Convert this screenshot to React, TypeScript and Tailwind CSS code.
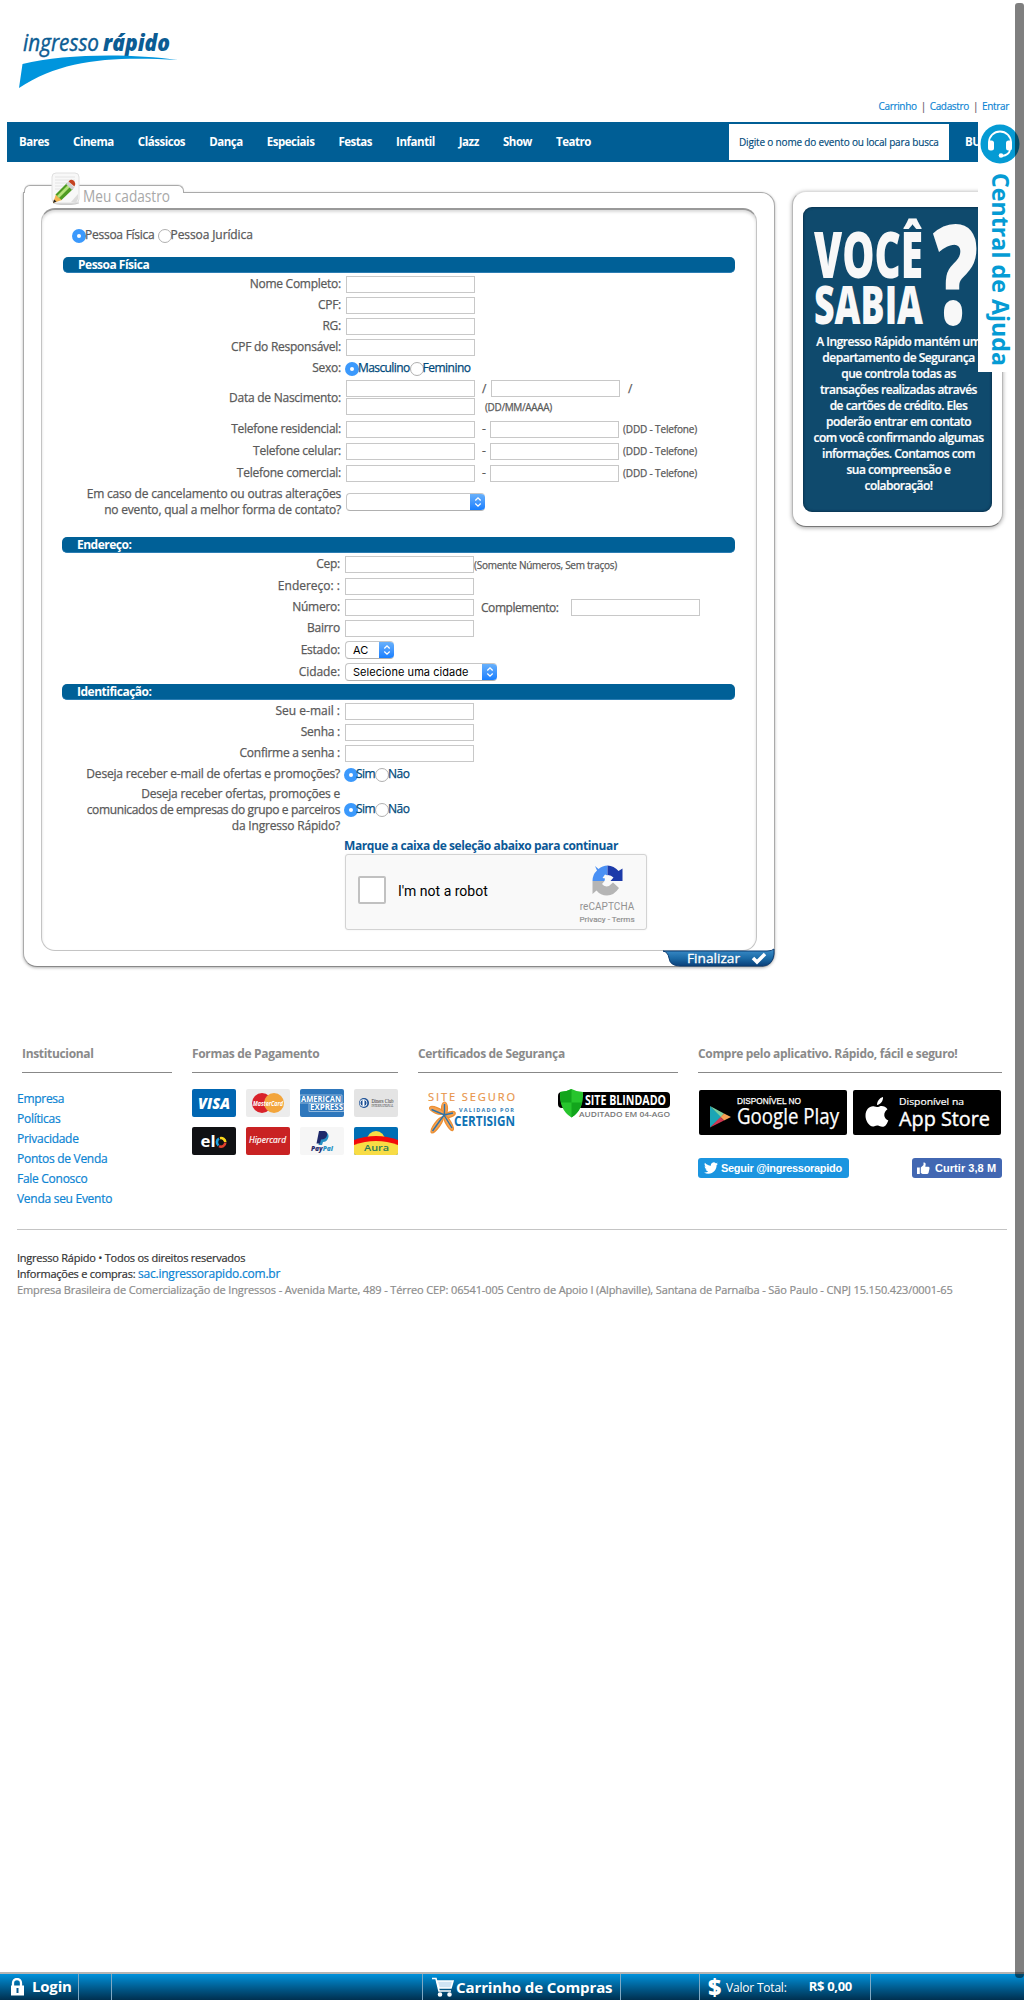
import type { ReactNode } from "react";

const SANS = "'Open Sans', 'Noto Sans', sans-serif";

function Logo() {
  return (
    <svg width="162" height="62" viewBox="0 0 162 62" className="block overflow-visible" fontFamily={SANS} fontStyle="italic" fill="#0b5c93">
      <text x="5" y="21" fontSize="23" stroke="#0b5c93" strokeWidth=".4" textLength="76" lengthAdjust="spacingAndGlyphs">ingresso</text>
      <text x="85" y="21" fontSize="23" fontWeight="800" textLength="67" lengthAdjust="spacingAndGlyphs">rápido</text>
      <path d="M4.500 34C45 24 110 23 160 30C95 26.500 45 29 1 58Z" fill="#0095dd" />
    </svg>
  );
}

function Radio({ checked = false }: { checked?: boolean }) {
  return checked ? (
    <span className="flex size-[14px] shrink-0 items-center justify-center rounded-full bg-[#3b99fc]">
      <span className="size-1 rounded-full bg-white" />
    </span>
  ) : (
    <span className="size-[14px] shrink-0 rounded-full border border-[#b0b0b0] bg-white" />
  );
}

function Field() {
  return <input className="block h-[17px] w-[129px] shrink-0 border border-[#c8c8c8] bg-white" />;
}

function Select({ text = "", width }: { text?: string; width: string }) {
  return (
    <div className={`flex h-[18px] overflow-hidden rounded-[4px] border border-r-0 border-[#c6c6c6] border-b-[#b0b0b0] bg-white ${width}`}>
      <span className="flex-1 pl-[7px] font-['Inter'] text-[11px] leading-4 font-normal tracking-[0.05px] whitespace-nowrap text-black [-webkit-text-stroke:0px]">{text}</span>
      <span className="-my-px flex w-[15px] items-center justify-center rounded-r-[4px] bg-linear-to-b from-[#6cb3fa] to-[#0a7bff]">
        <svg width="8" height="12" viewBox="0 0 8 12" fill="none" stroke="#fff" strokeWidth="1.300">
          <path d="M1.300 4.500L4 1.800L6.700 4.500M1.300 7.500L4 10.200L6.700 7.500" />
        </svg>
      </span>
    </div>
  );
}

function Row({ label, h = "h-[21px]", children }: { label: ReactNode; h?: string; children?: ReactNode }) {
  return (
    <div className={`flex items-center ${h}`}>
      <div className="mr-[5px] w-[278px] shrink-0 pb-px text-right leading-4 whitespace-nowrap">{label}</div>
      {children}
    </div>
  );
}

function Bar({ children, width = "w-[673px]" }: { children: ReactNode; width?: string }) {
  return (
    <div className={`h-4 rounded-[5px] border-b border-[#2b7db3] bg-[#006097] pl-[15px] text-[12px] leading-[15px] font-bold tracking-[-0.5px] text-white [-webkit-text-stroke:0px] ${width}`}>
      {children}
    </div>
  );
}

function Phone({ label }: { label: string }) {
  return (
    <Row label={label} h="h-[22px]">
      <Field />
      <span className="w-[15px] pl-[7px]">-</span>
      <Field />
      <span className="pl-1 text-[10px] tracking-[-0.15px] whitespace-nowrap">(DDD - Telefone)</span>
    </Row>
  );
}

function YesNo() {
  return (
    <div className="-ml-px flex items-center tracking-[-0.55px] text-[#00497a]">
      <Radio checked /><span className="-ml-0.5 pb-0.5">Sim</span><Radio /><span className="-ml-px pb-0.5">Não</span>
    </div>
  );
}

function PencilIcon() {
  return (
    <svg width="30" height="34" viewBox="0 0 30 34" className="absolute top-[-13px] left-[28px] z-20">
      <ellipse cx="15" cy="31" rx="13" ry="2" fill="#ccc" />
      <rect x="1" y="1" width="27" height="30" rx="4" fill="#f8f8f8" stroke="#e0e0e0" />
      <path d="M4 5h20M4 8h20M4 11h16M4 14h12M4 17h10" stroke="#e4e4e4" />
      <path d="M20 30l7-8v5l-2 4z" fill="#ddd" />
      <path d="M2 31l3-9 6 6z" fill="#f4b451" />
      <path d="M2 31l1-3.500 2.500 2z" fill="#222" />
      <path d="M4.500 22.500L16 11l6 6L10.500 28z" fill="#4e9c22" />
      <path d="M6 24L17.500 12.500l2 2L8 26z" fill="#b5e27a" />
      <path d="M15 12l2.500-2.500 6 6-2.500 2.500z" fill="#d0d0d0" />
      <path d="M17.500 9.500l1.500-1.500q3-.8 4.500 1.500t0 5z" fill="#c4421f" />
    </svg>
  );
}

function Captcha() {
  return (
    <div className="flex h-[76px] w-[302px] items-center rounded-[3px] border border-[#d3d3d3] bg-[#f9f9f9] font-['Roboto'] font-normal shadow-[0_0_2px_rgba(0,0,0,0.08)] [-webkit-text-stroke:0px]">
      <span className="-mt-1 ml-3 size-7 rounded-[2px] border-2 border-[#c1c1c1] bg-white" />
      <span className="ml-3 pb-0.5 text-[14px] tracking-[0px] text-black">I'm not a robot</span>
      <div className="mt-[7px] mr-3 ml-auto flex w-[54px] flex-col items-center text-[#929292]">
        <svg width="31" height="31" viewBox="0 0 31 31">
          <path d="M3 1L6.500 4Q10.500 .5 15.500 .5V10.500L13 9.500L10.500 13L13 13.500L12.500 16H.5Q.5 9.500 5 5.500z" fill="#4a90f4" />
          <path d="M15.500 .5Q22 .8 26.500 6L30.500 3.500V16H18.500L21.500 12.500Q19 9.800 15.500 10z" fill="#1c3aa9" />
          <path d="M.5 16H12.500L10 19Q12.500 22.500 17 21L21 17.500L27 23Q22 30.500 15 30.500Q8.500 30.500 4.500 25.500L.5 29z" fill="#b5b5b5" />
        </svg>
        <span className="mt-[3px] text-[10px] leading-[15px] tracking-[0.05px]">reCAPTCHA</span>
        <span className="text-[8px] leading-[12px] tracking-[0.05px] whitespace-nowrap [-webkit-text-stroke:0.2px]">Privacy - Terms</span>
      </div>
    </div>
  );
}

function Form() {
  return (
    <div className="relative mt-[23px] ml-4 w-[752px] font-normal tracking-[-0.25px] text-[#5a5a5a] [-webkit-text-stroke:0.25px]">
      <div className="relative z-10 ml-px h-2 w-[160px] rounded-t-[6px] border-t border-r border-l border-[#aaa] bg-white shadow-[0_-1px_1px_rgba(0,0,0,0.08)]" />
      <div className="relative -mt-px h-[775px] rounded-[14px] rounded-tl-none border border-[#aaa] border-b-[#888] bg-white px-[17px] pt-[15px] shadow-[0_1px_3px_rgba(0,0,0,0.3)]">
        <div className="h-[743px] rounded-[14px] border border-t-2 border-[#c4c4c4] border-t-[#999] bg-white pl-[21px] shadow-[inset_0_2px_3px_rgba(0,0,0,0.15)]">
          <div className="flex h-[47px] items-center pt-[5px] pl-[9px]">
            <Radio checked />
            <span className="-ml-px mr-[3px] pb-0.5">Pessoa Física</span>
            <Radio />
            <span className="-ml-px pb-0.5 tracking-[-0.1px]">Pessoa Jurídica</span>
          </div>
          <Bar width="w-[672px]">Pessoa Física</Bar>
          <div className="h-px" />
          <Row label="Nome Completo:"><Field /></Row>
          <Row label="CPF:"><Field /></Row>
          <Row label="RG:"><Field /></Row>
          <Row label="CPF do Responsável:"><Field /></Row>
          <Row label="Sexo:">
            <div className="-ml-px flex items-center tracking-[-0.6px] text-[#00497a]">
              <Radio checked /><span className="-ml-px pb-0.5">Masculino</span><Radio /><span className="-ml-px pb-0.5 tracking-[-0.5px]">Feminino</span>
            </div>
          </Row>
          <Row label="Data de Nascimento:" h="h-[39px]">
            <div className="-mt-0.5 flex flex-col gap-px">
              <div className="flex h-[17px] items-center"><Field /><span className="w-4 pl-[7px]">/</span><Field /><span className="pl-2">/</span></div>
              <div className="flex h-[17px] items-center"><Field /><span className="pt-0.5 pl-2.5 text-[10px] tracking-[-0.35px]">(DD/MM/AAAA)</span></div>
            </div>
          </Row>
          <Phone label="Telefone residencial:" />
          <Phone label="Telefone celular:" />
          <Phone label="Telefone comercial:" />
          <Row label={<span className="tracking-[-0.2px]">Em caso de cancelamento ou outras alterações<br />no evento, qual a melhor forma de contato?</span>} h="h-[36px]">
            <Select width="w-[139px]" />
          </Row>
          <div className="-ml-px mt-[17px]">
            <Bar>Endereço:</Bar>
            <Row label="Cep:" h="h-[23px]"><Field /><span className="pt-0.5 text-[10px] tracking-[-0.26px]">(Somente Números, Sem traços)</span></Row>
            <Row label={<span className="tracking-[0px]">Endereço: :</span>}><Field /></Row>
            <Row label="Número:"><Field /><span className="w-[97px] pl-[7px] tracking-[-0.45px]">Complemento:</span><Field /></Row>
            <Row label="Bairro"><Field /></Row>
            <Row label="Estado:" h="h-[22px]"><Select text="AC" width="w-[49px]" /></Row>
            <Row label={<span className="tracking-[-0.1px]">Cidade:</span>} h="h-[22px]"><Select text="Selecione uma cidade" width="w-[152px]" /></Row>
            <div className="h-px" />
            <Bar>Identificação:</Bar>
            <div className="h-px" />
            <Row label={<span className="tracking-[0px]">Seu e-mail :</span>}><Field /></Row>
            <Row label="Senha :"><Field /></Row>
            <Row label="Confirme a senha :"><Field /></Row>
            <Row label={<span className="tracking-[-0.2px]">Deseja receber e-mail de ofertas e promoções?</span>}><YesNo /></Row>
            <Row label={<span className="tracking-[-0.2px]">Deseja receber ofertas, promoções e<br /><span className="tracking-[-0.36px]">comunicados de empresas do grupo e parceiros</span><br />da Ingresso Rápido?</span>} h="h-[50px]"><YesNo /></Row>
            <div className="mt-0.5 ml-[282px]">
              <div className="h-[17px] pt-px leading-4 font-bold tracking-[-0.4px] whitespace-nowrap text-[#0c5896] [-webkit-text-stroke:0px]">Marque a caixa de seleção abaixo para continuar</div>
              <div className="pl-px"><Captcha /></div>
            </div>
          </div>
        </div>
      </div>
      <PencilIcon />
      <svg width="90" height="22" viewBox="0 0 90 22" className="absolute top-0 left-[60px] z-10 overflow-visible">
        <text x="0" y="17" fontFamily={SANS} fontSize="16" letterSpacing="0" fill="#a8a8a8" textLength="87" lengthAdjust="spacingAndGlyphs">Meu cadastro</text>
      </svg>
      <svg width="112" height="17" viewBox="0 0 112 17" className="absolute right-0 bottom-0 overflow-visible" fontFamily={SANS}>
        <defs>
          <linearGradient id="fin" x1="0" y1="0" x2="0" y2="1">
            <stop offset="0" stopColor="#3d8fcb" /><stop offset=".55" stopColor="#1b6aa6" /><stop offset="1" stopColor="#0a3f78" />
          </linearGradient>
        </defs>
        <path d="M0 1H104Q109 1 111 -1V4Q110 15 100 16H17Q7 16 6 8Q5 2 0 1z" fill="url(#fin)" stroke="#0b3c72" />
        <text x="24" y="13" fontSize="13.500" letterSpacing="0" fill="#fff" stroke="#fff" strokeWidth=".3" textLength="53" lengthAdjust="spacingAndGlyphs">Finalizar</text>
        <path d="M90 8l4 4 8-8" stroke="#fff" strokeWidth="3.500" fill="none" />
      </svg>
    </div>
  );
}

function DidYouKnow() {
  return (
    <aside className="mt-[29px] ml-[17px] h-[336px] w-[211px] rounded-[14px] border border-[#b8b8b8] border-t-[#dcdcdc] border-b-[#777] bg-white px-[10px] pt-[15px] shadow-[0_1px_4px_rgba(0,0,0,0.35)]">
      <div className="h-[305px] rounded-[9px] bg-[#0f4a6d] text-center text-white shadow-[inset_0_0_3px_rgba(0,20,40,0.8)]">
        <svg width="188" height="127" viewBox="0 0 188 127" className="block overflow-visible" fill="#f8f8f8" fontFamily={SANS} fontWeight="800">
          <text x="11" y="71" fontSize="64" textLength="109" lengthAdjust="spacingAndGlyphs">VOCÊ</text>
          <text x="11" y="117" fontSize="53" textLength="109" lengthAdjust="spacingAndGlyphs">SABIA</text>
          <text x="130" y="117" fontSize="138" textLength="45" lengthAdjust="spacingAndGlyphs">?</text>
        </svg>
        <p className="ml-0.5 text-[12px] leading-4 font-semibold tracking-[-0.5px] whitespace-nowrap [-webkit-text-stroke:0.2px]">
          A Ingresso Rápido mantém um<br />departamento de Segurança<br />que controla todas as<br />transações realizadas através<br />de cartões de crédito. Eles<br />poderão entrar em contato<br />com você confirmando algumas<br />informações. Contamos com<br />sua compreensão e<br />colaboração!
        </p>
      </div>
    </aside>
  );
}

const C = "block h-7 w-11 rounded-[2px]";

function Cards() {
  return (
    <div className="mt-4 grid grid-cols-4 gap-x-[10px] gap-y-[10px]">
      <svg viewBox="0 0 44 28" className={C} fontFamily={SANS}>
        <rect width="44" height="28" fill="#0066b2" />
        <text x="6" y="19.500" fontSize="15" fontWeight="800" fontStyle="italic" fill="#fff" textLength="32" lengthAdjust="spacingAndGlyphs">VISA</text>
      </svg>
      <svg viewBox="0 0 44 28" className={C} fontFamily={SANS}>
        <rect width="44" height="28" fill="#ececec" />
        <circle cx="16" cy="14" r="10" fill="#d9222a" /><circle cx="28" cy="14" r="10" fill="#f3a53c" />
        <text x="7" y="16.500" fontSize="7.500" fontWeight="700" fontStyle="italic" fill="#fff" textLength="30" lengthAdjust="spacingAndGlyphs">MasterCard</text>
      </svg>
      <svg viewBox="0 0 44 28" className={C} fontFamily={SANS} fontWeight="700">
        <rect width="44" height="28" fill="#2e77bc" />
        <path d="M0 6h42v8H0z M9 14.500h35v8H9z" fill="none" stroke="#b9d2ea" strokeWidth=".7" />
        <text x="1" y="12.800" fontSize="8" fill="#fff" textLength="40" lengthAdjust="spacingAndGlyphs">AMERICAN</text>
        <text x="10" y="21.300" fontSize="8" fill="#fff" textLength="33" lengthAdjust="spacingAndGlyphs">EXPRESS</text>
      </svg>
      <svg viewBox="0 0 44 28" className={C} fontFamily="'Liberation Serif', serif" fill="#333">
        <rect width="44" height="28" fill="#e4e4e4" />
        <circle cx="10" cy="14" r="5" fill="#1b4f94" /><circle cx="9.500" cy="14" r="3.800" fill="#fff" />
        <path d="M8.500 11a3.200 3.200 0 0 0 0 6zM10.500 11a3.200 3.200 0 0 1 0 6z" fill="#1b4f94" />
        <text x="17.500" y="14" fontSize="6" textLength="22" lengthAdjust="spacingAndGlyphs">Diners Club</text>
        <text x="17.500" y="17.500" fontSize="3" textLength="22" lengthAdjust="spacingAndGlyphs">INTERNATIONAL</text>
      </svg>
      <svg viewBox="0 0 44 28" className={C} fontFamily={SANS}>
        <rect width="44" height="28" fill="#101114" />
        <text x="8.500" y="20" fontSize="16" fontWeight="700" fill="#fff" textLength="15" lengthAdjust="spacingAndGlyphs">el</text>
        <g fill="none" strokeWidth="2.600">
          <path d="M27 11.500A4.300 4.300 0 0 0 26.500 18.500" stroke="#1ba0e0" />
          <path d="M28 11.200A4.300 4.300 0 0 1 33.300 15" stroke="#fbd81c" />
          <path d="M33.300 15.500A4.300 4.300 0 0 1 27 19.200" stroke="#e3402c" />
        </g>
      </svg>
      <svg viewBox="0 0 44 28" className={C} fontFamily={SANS}>
        <rect width="44" height="28" fill="#c92223" />
        <text x="3" y="16" fontSize="9" fontStyle="italic" fill="#fff" stroke="#fff" strokeWidth=".2" textLength="37" lengthAdjust="spacingAndGlyphs">Hipercard</text>
      </svg>
      <svg viewBox="0 0 44 28" className={C} fontFamily={SANS} fontWeight="800" fontStyle="italic">
        <rect width="44" height="28" fill="#f6f6f6" />
        <path d="M20.500 6H27q2.500 2 1 5.500t-5 3.500l-1 3h-3.500z" fill="#2790c3" />
        <path d="M19 4h5.500q3.500.5 2.500 4.500t-6 4l-1 4h-3.500z" fill="#1f2a6b" />
        <text x="11" y="23.500" fontSize="6" fill="#1f2a6b" textLength="22" lengthAdjust="spacingAndGlyphs">Pay<tspan fill="#2790c3">Pal</tspan></text>
      </svg>
      <svg viewBox="0 0 44 28" className={C} fontFamily={SANS} fontWeight="600">
        <rect width="44" height="28" fill="#006eb5" />
        <circle cx="22" cy="13" r="9" fill="#f8dc45" />
        <path d="M0 13Q22 5 44 13V19H0z" fill="#f20a0a" />
        <path d="M0 18Q22 10 44 18V28H0z" fill="#f8dc45" />
        <text x="10" y="24" fontSize="8" fill="#277a58" textLength="25" lengthAdjust="spacingAndGlyphs">Aura</text>
      </svg>
    </div>
  );
}

function Certificates() {
  return (
    <div className="flex">
      <svg width="90" height="46" viewBox="0 0 90 46" className="mt-[18px] ml-2.5" fontFamily={SANS}>
        <text x="0" y="10" fontSize="11" fill="#e8954a" stroke="#e8954a" strokeWidth=".2" textLength="87">SITE SEGURO</text>
        <g fill="#f5a253" stroke="#ec8f33" strokeWidth="1.200">
          <ellipse cx="16.500" cy="17.500" rx="3" ry="6.500" />
          <ellipse cx="8.500" cy="19.500" rx="2.800" ry="7.500" transform="rotate(-68 8.500 19.500)" />
          <ellipse cx="22" cy="23.500" rx="2.500" ry="5.500" transform="rotate(70 22 23.500)" />
          <ellipse cx="9" cy="34" rx="2.800" ry="9.500" transform="rotate(36 9 34)" />
          <ellipse cx="20.500" cy="32" rx="2.600" ry="8.500" transform="rotate(-30 20.500 32)" />
        </g>
        <path d="M16.500 13v11L3.500 18.500M16 24l9-2M16 24L4.500 40M16 24l8 13" fill="none" stroke="#2d72a8" strokeWidth="1.400" />
        <text x="31" y="21" fontSize="5.500" fontWeight="700" fill="#2c7bb6" textLength="55">VALIDADO POR</text>
        <text x="26" y="34.500" fontSize="13.500" fontWeight="700" fill="#0f72b5" textLength="61" lengthAdjust="spacingAndGlyphs">CERTISIGN</text>
      </svg>
      <svg width="114" height="32" viewBox="0 0 114 32" className="mt-[15px] ml-[39px] overflow-visible" fontFamily={SANS}>
        <rect x="1" y="4" width="112" height="16" rx="4" />
        <text x="28" y="17" fontSize="14" fontWeight="700" fill="#fff" textLength="81" lengthAdjust="spacingAndGlyphs">SITE BLINDADO</text>
        <path d="M14.500 1Q20 4 26 4Q27 22 14.500 29.500Q2 22 3 4Q9 4 14.500 1z" fill="#27c52d" />
        <path d="M14.500 1Q9 4 3 4Q3 10 4 14.500H14.500zM14.500 14.500H25Q23 24 14.500 29.500z" fill="#12a51c" />
        <text x="22" y="28.500" fontSize="7.500" fontWeight="600" fill="#777" textLength="91" lengthAdjust="spacingAndGlyphs">AUDITADO EM 04-AGO</text>
      </svg>
    </div>
  );
}

function Apps() {
  return (
    <>
      <div className="mt-[17px] ml-px flex gap-1.5">
        <svg width="148" height="45" viewBox="0 0 148 45" fill="#fff" stroke="#fff" strokeWidth=".25">
          <rect width="148" height="45" rx="2" fill="#000" stroke="none" />
          <g stroke="none">
            <path d="M11 16L23 27L11 37.500z" fill="#1ba5b5" />
            <path d="M11 16L25 23.500L22 27z" fill="#7bd0a0" />
            <path d="M25 23.500L32 27L25 30.500L21.500 27z" fill="#f7a154" />
            <path d="M11 37.500L21.500 27L25 30.500z" fill="#cf3753" />
          </g>
          <text x="38" y="13.500" fontSize="8.500" fontFamily="'Liberation Sans', sans-serif" textLength="64" lengthAdjust="spacingAndGlyphs">DISPONÍVEL NO</text>
          <text x="38" y="34" fontSize="21.500" fontFamily={SANS} textLength="102" lengthAdjust="spacingAndGlyphs">Google Play</text>
        </svg>
        <svg width="148" height="45" viewBox="0 0 148 45" fill="#fff" fontFamily={SANS}>
          <rect width="148" height="45" rx="2" fill="#000" />
          <path d="M24 15c0-4 2.500-7 6-8c.3 4-2.500 7.500-6 8z" />
          <path d="M12.500 26c0-7 4.500-10.500 9-9.500c2 .6 3 .6 5-.1c3-.9 6 .2 8 2.800c-4.500 3-4.300 9 .8 11.300c-2.500 6.500-5 7.300-9 5.500c-2-.7-3-.5-5 .2c-4.500 1.500-8.800-5-8.800-10.200z" />
          <text x="46" y="15" fontSize="9.500" stroke="#fff" strokeWidth=".2" textLength="65" lengthAdjust="spacingAndGlyphs">Disponível na</text>
          <text x="46" y="36" fontSize="20.500" stroke="#fff" strokeWidth=".4" textLength="91" lengthAdjust="spacingAndGlyphs">App Store</text>
        </svg>
      </div>
      <div className="mt-[23px] flex justify-between font-['Liberation_Sans'] text-[11px] leading-5 font-bold whitespace-nowrap text-white">
        <span className="flex h-5 w-[151px] items-center rounded-[3px] bg-[#1b95e0] pl-1.5 tracking-[-0.3px]">
          <svg width="14" height="14" viewBox="0 0 24 24" fill="#fff" className="mr-[3px]">
            <path d="M23.950 4.570a10 10 0 0 1-2.820.770 4.960 4.960 0 0 0 2.160-2.720c-.95.550-2 .950-3.130 1.180a4.920 4.920 0 0 0-8.380 4.480C7.690 8.100 4.070 6.130 1.640 3.160a4.820 4.820 0 0 0-.660 2.480c0 1.710.870 3.210 2.190 4.100a4.900 4.900 0 0 1-2.230-.620v.060a4.920 4.920 0 0 0 3.950 4.830 5 5 0 0 1-2.210.080 4.940 4.940 0 0 0 4.600 3.420A9.870 9.870 0 0 1 0 19.540a13.990 13.990 0 0 0 7.550 2.210c9.050 0 14-7.500 14-13.990 0-.210 0-.420-.020-.630a9.940 9.940 0 0 0 2.420-2.560z" />
          </svg>
          Seguir @ingressorapido
        </span>
        <span className="flex h-5 w-[90px] items-center rounded-[3px] bg-[#4267b2] pl-[5px] tracking-[0.05px]">
          <svg width="13" height="13" viewBox="0 0 13 13" fill="#fff" className="mr-[5px]">
            <path d="M0 5.500h2.800V12H0zM3.800 5.500L6.500 3V.5q2-.5 2.200 1.500L8.300 4.700h3.300q1.400.4.900 1.800L11.500 11q-.4 1-1.500 1H5.500L3.800 11z" />
          </svg>
          Curtir 3,8 M
        </span>
      </div>
    </>
  );
}

function Heading({ children }: { children: ReactNode }) {
  return <h3 className="h-[27px] border-b border-[#888] text-[12px] leading-4 font-bold tracking-[-0.33px] whitespace-nowrap text-[#8a8a8a]">{children}</h3>;
}

function Footer() {
  return (
    <footer className="absolute top-[1045px] right-0 left-0">
      <div className="flex h-[184px] gap-5 pt-px pl-[22px]">
        <div className="w-[150px]">
          <Heading>Institucional</Heading>
          <ul className="mt-4 -ml-[5px] text-[12px] leading-5 tracking-[-0.28px] text-[#0b84d3] [-webkit-text-stroke:0.2px]">
            <li>Empresa</li><li>Políticas</li><li>Privacidade</li><li>Pontos de Venda</li><li>Fale Conosco</li><li>Venda seu Evento</li>
          </ul>
        </div>
        <div className="w-[206px]"><Heading>Formas de Pagamento</Heading><Cards /></div>
        <div className="w-[260px]"><Heading>Certificados de Segurança</Heading><Certificates /></div>
        <div className="w-[304px]"><Heading>Compre pelo aplicativo. Rápido, fácil e seguro!</Heading><Apps /></div>
      </div>
      <div className="ml-[17px] w-[990px] border-t border-[#c4c4c4] pt-5 text-[11px] leading-4 whitespace-nowrap text-[#333] [-webkit-text-stroke:0.2px]">
        <div className="tracking-[-0.24px]">Ingresso Rápido • Todos os direitos reservados</div>
        <div className="tracking-[-0.24px]">Informações e compras: <span className="text-[12px] tracking-[-0.22px] text-[#0b84d3]">sac.ingressorapido.com.br</span></div>
        <div className="tracking-[-0.13px] text-[#8c8c8c]">Empresa Brasileira de Comercialização de Ingressos - Avenida Marte, 489 - Térreo CEP: 06541-005 Centro de Apoio I (Alphaville), Santana de Parnaíba - São Paulo - CNPJ 15.150.423/0001-65</div>
      </div>
    </footer>
  );
}

function HelpTab() {
  return (
    <div className="absolute top-[122px] right-0 h-[250px] w-[46px] bg-white">
      <svg width="40" height="40" viewBox="0 0 40 40" className="absolute top-[1.5px] left-0.5">
        <circle cx="20" cy="20" r="19.500" fill="#059bd4" />
        <path d="M9 20V18.500a11 11 0 0 1 22 0V20M30 26q-1 5-8 6" fill="none" stroke="#fff" strokeWidth="1.800" />
        <rect x="8" y="16.500" width="6" height="10" rx="2.500" fill="#fff" /><rect x="26" y="16.500" width="6" height="10" rx="2.500" fill="#fff" />
        <circle cx="21" cy="31.500" r="2.300" fill="#fff" />
      </svg>
      <svg width="32" height="200" viewBox="0 0 32 200" className="absolute top-[48px] left-0.5 overflow-visible">
        <text transform="translate(12 3) rotate(90)" fontFamily={SANS} fontSize="23" fontWeight="700" fill="#059bd4" textLength="193" lengthAdjust="spacingAndGlyphs">Central de Ajuda</text>
      </svg>
    </div>
  );
}

function BottomBar() {
  return (
    <div className="absolute top-[1972px] right-0 left-0 flex h-7 border-t-2 border-[#b5b5b5] bg-linear-to-b from-[#0092dc] to-[#003050] text-white">
      <div className="flex w-[79px] items-center border-r border-[#7fa9c4] pl-[10px] text-[15px] font-bold tracking-[-0.2px]">
        <svg width="15" height="18" viewBox="0 0 15 18" className="mr-[7px]">
          <path d="M3 8V5a4 4 0 0 1 8 0v3" fill="none" stroke="#fff" strokeWidth="2.300" /><rect x="1" y="7.500" width="13" height="10" fill="#fff" /><path d="M6.500 10h2v5h-2z" fill="#05598f" />
        </svg>
        <span className="pb-0.5">Login</span>
      </div>
      <div className="w-[33px] border-r border-[#7fa9c4]" />
      <div className="w-[311px] border-r border-[#7fa9c4]" />
      <div className="flex w-[198px] items-center border-r border-[#7fa9c4] pl-[9px] text-[15px] font-bold whitespace-nowrap">
        <svg width="22" height="20" viewBox="0 0 22 20" className="mr-[2px]" fill="none" stroke="#fff" strokeWidth="1.600">
          <path d="M0 1.500h4L7 14h12" /><path d="M5 4h16l-2 7H7z" fill="#cfe4f3" /><circle cx="8" cy="17.500" r="1.500" fill="#fff" /><circle cx="17.500" cy="17.500" r="1.500" fill="#fff" />
        </svg>
        <span className="tracking-[-0.1px]">Carrinho de Compras</span>
      </div>
      <div className="w-[79px] border-r border-[#7fa9c4]" />
      <div className="flex w-[171px] items-center border-r border-[#7fa9c4] pl-2 whitespace-nowrap">
        <span className="w-[18px] text-[23px] leading-6 font-extrabold">$</span>
        <span className="pt-0.5 text-[12px] tracking-[-0.2px]">Valor Total:</span>
        <span className="mr-[18px] ml-auto text-[13px] font-bold tracking-[-0.3px]">R$ 0,00</span>
      </div>
    </div>
  );
}

const NAV = ["Bares", "Cinema", "Clássicos", "Dança", "Especiais", "Festas", "Infantil", "Jazz", "Show", "Teatro"];

export default function App() {
  return (
    <div className="relative h-[2000px] w-[1024px] overflow-hidden bg-white font-['Open_Sans'] text-[12px]">
      <header className="flex h-[122px] justify-between pt-[30px] pr-[15px] pl-[18px]">
        <Logo />
        <div className="mt-[68px] flex h-4 gap-1 text-[10px] leading-4 tracking-[-0.33px] text-[#0b84d3] [-webkit-text-stroke:0.15px]">
          <span>Carrinho</span><span className="w-[5px] text-center text-[#656]">|</span><span>Cadastro</span><span className="w-[5px] text-center text-[#656]">|</span><span>Entrar</span>
        </div>
      </header>
      <nav className="ml-[7px] flex h-10 w-[1002px] items-center bg-[#005e95] pl-3 text-white">
        <div className="flex w-[710px] gap-6 text-[11.5px] font-bold tracking-[-0.46px]">{NAV.map((n) => <span key={n}>{n}</span>)}</div>
        <div className="h-9 w-[220px] bg-white pl-2.5 text-[10px] leading-9 tracking-[-0.17px] whitespace-nowrap text-[#00497a] [-webkit-text-stroke:0.15px]">Digite o nome do evento ou local para busca</div>
        <span className="pl-4 text-[11.5px] font-bold tracking-[-0.5px]">BUSCAR</span>
      </nav>
      <main className="flex items-start pl-[7px]">
        <Form />
        <DidYouKnow />
      </main>
      <Footer />
      <HelpTab />
      <BottomBar />
      <div className="absolute top-[3px] right-0 h-[1975px] w-[9px] rounded-t-[3px] rounded-b-[4px] bg-black/50" />
    </div>
  );
}
